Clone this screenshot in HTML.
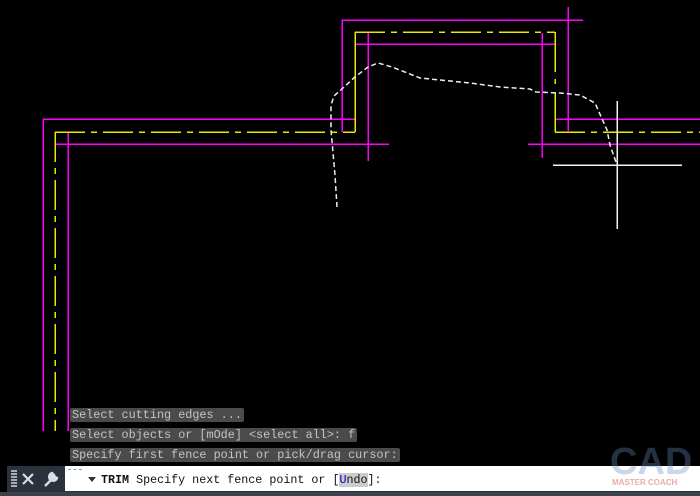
<!DOCTYPE html><html><head><style>
body{margin:0;width:700px;height:496px;background:#000;overflow:hidden;position:relative;font-family:"Liberation Mono",monospace}
.l{position:absolute;height:14px;line-height:14px;font-size:11.8px;color:#c4c4c4;background:#4b4b4b;padding:0 2px;left:70px;border-radius:2px;white-space:pre}
</style></head><body>
<svg width="700" height="496" style="position:absolute;left:0;top:0" shape-rendering="crispEdges">
<g stroke="#ff00ff" stroke-width="1.5" fill="none">
<path d="M342 20H583M342 20V132M568 7V131M355 44H555M368 33V161M542 33V158M43 119H355M555 119H700M55 144H389M528 144H700M43 119V431M68 132V431"/>
</g>
<g stroke="#e8e800" stroke-width="1.5" fill="none">
<path d="M355 32V132M555 32V72M555 79V84M555 92V132" />
<path d="M55 132H355M555 132H700M355 32H555M55 132V431" stroke-dasharray="30 6 6 6"/>
</g>
<path d="M337 207 L335 175 L331 130 L331 105 L334 96 L343 88 L355 77 L368 67 L378 63 L392 67 L420 78 L440 80 L470 83 L500 87 L530 89 L536 92 L560 93 L580 95 L595 103 L607 130 L610 145 L617 165" stroke="#eee" stroke-width="1.5" fill="none" stroke-dasharray="5 3" shape-rendering="auto"/>
<path d="M617 101V229M553 165H682" stroke="#f4f4f4" stroke-width="1.5"/>
</svg>
<div class="l" style="top:408px">Select cutting edges ...</div>
<div class="l" style="top:428px">Select objects or [mOde] &lt;select all&gt;: f</div>
<div class="l" style="top:448px">Specify first fence point or pick/drag cursor:</div>
<div style="position:absolute;left:7px;top:466px;width:693px;height:26px;background:#2c323b"></div>
<div style="position:absolute;left:0;top:492px;width:700px;height:4px;background:#3c424b"></div>
<div style="position:absolute;left:11px;top:470px;width:6px;height:18px;background:repeating-linear-gradient(#aab 0 2px,transparent 2px 3px)"></div>
<svg width="60" height="26" style="position:absolute;left:0;top:466px">
<path d="M23 8L33 18M33 8L23 18" stroke="#d8dde4" stroke-width="2.2"/>
<path d="M45 20L53 12M52 7a4 4 0 1 0 5 5l-2 -1l-1 -2l-1 -1z" stroke="#d8dde4" stroke-width="2.4" fill="#d8dde4"/>
</svg>
<div style="position:absolute;left:65px;top:466px;width:635px;height:25px;background:#fff"></div>
<div style="position:absolute;left:68px;top:469px;width:14px;height:1px;border-top:1px dashed #6ad"></div>
<div style="position:absolute;left:88px;top:477px;width:0;height:0;border-left:4px solid transparent;border-right:4px solid transparent;border-top:5px solid #333"></div>
<div style="position:absolute;left:101px;top:472px;font-size:11.7px;line-height:16px;color:#111;white-space:pre"><b>TRIM</b> Specify next fence point or [<span style="background:#ccc;color:#00c">U</span><span style="background:#ccc">ndo</span>]:</div>
<div style="position:absolute;left:610px;top:441px;font:bold 38px 'Liberation Sans',sans-serif;color:rgba(100,140,190,.35)">CAD</div>
<div style="position:absolute;left:612px;top:478px;font:bold 8px 'Liberation Sans',sans-serif;color:rgba(230,140,140,.75)">MASTER COACH</div>
</body></html>
